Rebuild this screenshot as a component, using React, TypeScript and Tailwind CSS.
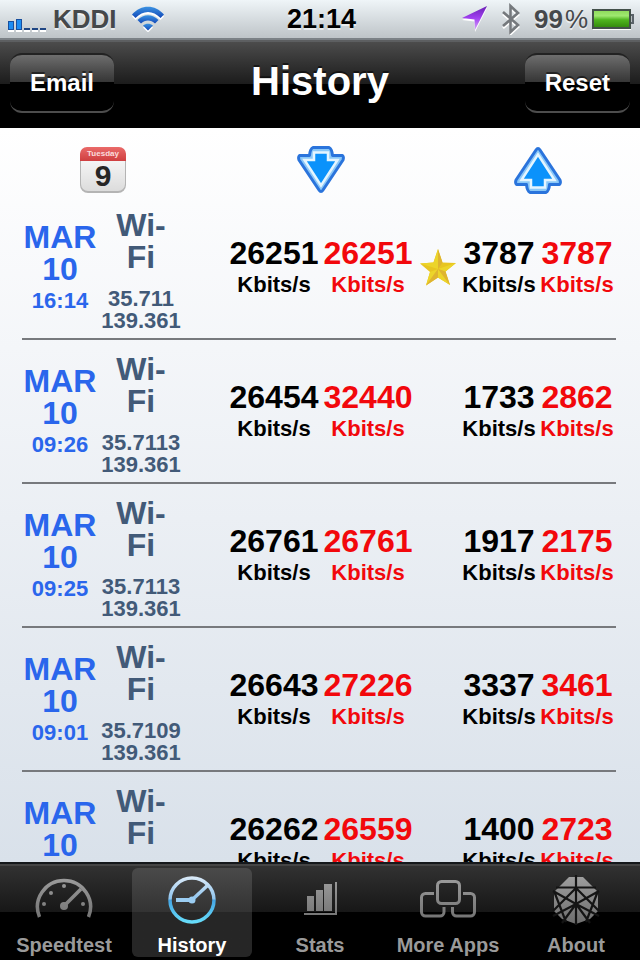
import React from "react";

type Entry = {
  time: string;
  lat: string;
  lng: string;
  down: string;
  downMax: string;
  up: string;
  upMax: string;
  starred?: boolean;
};

const entries: Entry[] = [
  { time: "16:14", lat: "35.711", lng: "139.361", down: "26251", downMax: "26251", up: "3787", upMax: "3787", starred: true },
  { time: "09:26", lat: "35.7113", lng: "139.361", down: "26454", downMax: "32440", up: "1733", upMax: "2862" },
  { time: "09:25", lat: "35.7113", lng: "139.361", down: "26761", downMax: "26761", up: "1917", upMax: "2175" },
  { time: "09:01", lat: "35.7109", lng: "139.361", down: "26643", downMax: "27226", up: "3337", upMax: "3461" },
  { time: "", lat: "", lng: "", down: "26262", downMax: "26559", up: "1400", upMax: "2723" },
];

function StatusBar() {
  return (
    <div className="grid h-10 shrink-0 grid-cols-[1fr_auto_1fr] items-center border-b-2 border-[#7b8186] bg-linear-to-b from-[#eff5f8] to-[#bec4c8] pr-[5px] pl-2 text-[26px] leading-8 font-bold text-[#45484b] text-shadow-[0_2px_0_#ffffff99]">
      <div className="flex items-center">
        <svg width="39" height="13" viewBox="0 0 39 13" className="mt-3 mr-[6px] shrink-0" aria-hidden="true">
          <rect x="0.5" y="2.5" width="5" height="8" fill="#1c8df2" stroke="#174f9e" />
          <rect x="8.5" y="0.5" width="5" height="10" fill="#1c8df2" stroke="#174f9e" />
          <path d="M16 10h6M24 10h6M32 10h6" stroke="#1f4684" strokeWidth="2" />
          <path d="M0 12h6M8 12h6M16 12h6M24 12h6M32 12h6" stroke="#fff" strokeWidth="2" />
        </svg>
        <span>KDDI</span>
        <svg width="34" height="26" viewBox="0 0 34 26" className="ml-[14px] shrink-0" fill="none" aria-hidden="true">
          <defs>
            <linearGradient id="wifi" x1="0" y1="0" x2="0" y2="1">
              <stop offset="0" stopColor="#3b93e2" />
              <stop offset="1" stopColor="#1248b8" />
            </linearGradient>
          </defs>
          <g fill="#fff" transform="translate(0 2)">
            <path d="M1 8.500C10 -2 24 -2 33 8.500L29.500 12C22 4 12 4 4.500 12ZM12 19.500 17 24.500 22 19.500C19 17 15 17 12 19.500Z" />
          </g>
          <g fill="url(#wifi)">
            <path d="M1 8.500C10 -2 24 -2 33 8.500L29.500 12C22 4 12 4 4.500 12Z" />
            <path d="M6.500 14C12.500 7.500 21.500 7.500 27.500 14L24 17.500C20 13.500 14 13.500 10 17.500Z" />
            <path d="M12 19.500C15 17 19 17 22 19.500L17 24.500Z" />
          </g>
        </svg>
      </div>
      <span className="text-[27px] text-black">21:14</span>
      <div className="flex items-center justify-end">
        <svg width="26" height="26" viewBox="0 0 26 26" className="mr-[13px]" aria-hidden="true">
          <defs>
            <linearGradient id="loc" x1="0" y1="0" x2="0" y2="1">
              <stop offset="0" stopColor="#6a20b4" />
              <stop offset="0.5" stopColor="#a040f0" />
              <stop offset="1" stopColor="#d8a8fa" />
            </linearGradient>
          </defs>
          <path d="M25 2 13 26 12.500 15.500 0 14Z" fill="#fff" />
          <path d="M25 0 13 24 12.500 13.500 0 12Z" fill="url(#loc)" />
        </svg>
        <svg width="20" height="32" viewBox="0 0 20 32" className="mr-[13px]" fill="none" strokeWidth="2.600" aria-hidden="true">
          <path d="M2 10 17 23 9.500 30V4L17 11 2 24" stroke="#fff" transform="translate(0 1)" />
          <path d="M2 9 17 22 9.500 29V3L17 10 2 23" stroke="#75797d" />
        </svg>
        <span>99</span>
        <span className="ml-[2px] font-normal">%</span>
        <svg width="43" height="22" viewBox="0 0 43 22" className="ml-1" aria-hidden="true">
          <defs>
            <linearGradient id="bat" x1="0" y1="0" x2="0" y2="1">
              <stop offset="0" stopColor="#8fdc5c" />
              <stop offset="0.3" stopColor="#9fe870" />
              <stop offset="0.550" stopColor="#4fb51f" />
              <stop offset="1" stopColor="#358c0e" />
            </linearGradient>
          </defs>
          <path d="M1 21h38" stroke="#fff" strokeWidth="2" />
          <rect x="1" y="2" width="37" height="18" fill="#cfeebb" stroke="#43504a" strokeWidth="2" />
          <rect x="2" y="3" width="35" height="16" fill="url(#bat)" />
          <path d="M39 7h2v8h-2" fill="#b8bec2" stroke="#5a6268" strokeWidth="2" />
        </svg>
      </div>
    </div>
  );
}

function NavButton({ children }: { children: string }) {
  return (
    <button
      type="button"
      className="h-[60px] rounded-xl border-t-2 border-b-2 border-t-[#222] border-b-[#4d4d4d] bg-linear-to-b from-[#6e6e6e] via-[#353535] via-[49%] to-black to-[49%] px-5 text-2xl font-bold text-white text-shadow-[0_-2px_0_#00000080]"
    >
      {children}
    </button>
  );
}

function NavBar() {
  return (
    <header className="grid h-22 shrink-0 grid-cols-[1fr_auto_1fr] items-center border-t-2 border-[#5d5f61] bg-linear-to-b from-[#4c4c4c] via-[#1c1c1c] via-[49%] to-black to-[49%] px-[10px] pb-1">
      <div>
        <NavButton>Email</NavButton>
      </div>
      <h1 className="pb-1 text-[40px] leading-[48px] font-bold text-white text-shadow-[0_-2px_0_#00000080]">History</h1>
      <div className="text-right">
        <NavButton>Reset</NavButton>
      </div>
    </header>
  );
}

function CalendarIcon() {
  return (
    <svg width="48" height="48" viewBox="0 0 48 48" className="mx-auto block" role="img" aria-label="Date">
      <defs>
        <linearGradient id="page" x1="0" y1="0" x2="0" y2="1">
          <stop offset="0" stopColor="#fff" />
          <stop offset="1" stopColor="#dcdcdc" />
        </linearGradient>
        <linearGradient id="band" x1="0" y1="0" x2="0" y2="1">
          <stop offset="0" stopColor="#ea6a69" />
          <stop offset="1" stopColor="#cf3f40" />
        </linearGradient>
      </defs>
      <rect x="1" y="2" width="46" height="45" rx="8" fill="#b4b4b4" />
      <rect x="2" y="2" width="44" height="43" rx="7" fill="url(#page)" />
      <path d="M1 15V8a7 7 0 0 1 7-7h32a7 7 0 0 1 7 7v7Z" fill="url(#band)" />
      <text x="24" y="10" textAnchor="middle" fontSize="8" fontWeight="700" fill="#fbdcdc">Tuesday</text>
      <text x="24" y="40" textAnchor="middle" fontSize="30" fontWeight="700" fill="#262626">9</text>
    </svg>
  );
}

function ArrowIcon({ up = false }: { up?: boolean }) {
  return (
    <svg
      width="48"
      height="48"
      viewBox="0 0 48 48"
      className={up ? "mx-auto block rotate-180" : "mx-auto block"}
      role="img"
      aria-label={up ? "Upload" : "Download"}
      strokeLinejoin="round"
    >
      <path d="M16 1.500H32Q35 3 35.500 9.500H45.500Q47 11 46 14L26 44Q24 47 22 44L2 14Q1 11 2.500 9.500H12.500Q13 3 16 1.500Z" fill="#8ac8f8" stroke="#2a74dc" strokeWidth="3" />
      <path d="M17 6.500H31V14H40.500L24 39.500 7.500 14H17Z" fill="#0b92fb" stroke="#e4f5ff" strokeWidth="2.500" strokeLinejoin="miter" />
    </svg>
  );
}

function StarIcon() {
  return (
    <svg width="38" height="38" viewBox="0 0 38 38" className="mx-auto block" role="img" aria-label="Best result">
      <path d="M19 1 23.500 14.500 37 15 26.500 23.500 31 37 19 29.500 7 37.500 11 24 1 15.500 14.500 14.500Z" fill="#e8c521" />
      <path d="M19 1V21L14.500 14.500ZM37 15 19 21 26.500 23.500ZM31 37 19 21V29.500ZM7 37.500 19 21 11 24ZM1 15.500 19 21 14.500 14.500Z" fill="#ecd42a" />
      <path d="M19 1V21L23.500 14.500ZM31 37 19 21 26.500 23.500ZM7 37.500 19 21V29.500Z" fill="#dfb430" />
    </svg>
  );
}

function Rate({ value, peak = false }: { value: string; peak?: boolean }) {
  return (
    <td className={peak ? "border-b-2 border-[#77797d] p-0 pb-px text-[#f2080c]" : "border-b-2 border-[#77797d] p-0 pb-px text-black"}>
      <div className="text-[32px] leading-8">{value}</div>
      <div className="mt-[5px] text-[22px] leading-[22px]">Kbits/s</div>
    </td>
  );
}

function HistoryTable() {
  return (
    <table className="w-full table-fixed border-separate border-spacing-0 text-center font-bold">
      <colgroup>
        <col className="w-[76px]" />
        <col className="w-[86px]" />
        <col />
        <col className="w-[94px]" />
        <col className="w-[94px]" />
        <col className="w-[45px]" />
        <col className="w-[78px]" />
        <col className="w-[78px]" />
      </colgroup>
      <thead>
        <tr>
          <th colSpan={2} className="p-0 pt-[18px] pb-[2px]"><CalendarIcon /></th>
          <td className="p-0" />
          <th colSpan={2} className="p-0 pt-[18px] pb-[2px]"><ArrowIcon /></th>
          <td className="p-0" />
          <th colSpan={2} className="p-0 pt-[18px] pb-[2px]"><ArrowIcon up /></th>
        </tr>
      </thead>
      <tbody>
        {entries.map((e) => (
          <tr key={e.down}>
            <td className="border-b-2 border-[#77797d] p-0 pb-px text-[#2a66ec]">
              <div className="text-[32px] leading-8">MAR<br />10</div>
              <div className="mt-[5px] h-[22px] text-[22px] leading-[22px]">{e.time}</div>
            </td>
            <td className="border-b-2 border-[#77797d] p-0 pt-[13px] pb-[6px] text-[#425a78]">
              <div className="text-[32px] leading-8">Wi-<br />Fi</div>
              <div className="mt-[15px] h-11 text-[22px] leading-[22px]">{e.lat}<br />{e.lng}</div>
            </td>
            <td className="border-b-2 border-[#77797d] p-0" />
            <Rate value={e.down} />
            <Rate value={e.downMax} peak />
            <td className="border-b-2 border-[#77797d] p-0">{e.starred && <StarIcon />}</td>
            <Rate value={e.up} />
            <Rate value={e.upMax} peak />
          </tr>
        ))}
      </tbody>
    </table>
  );
}

function TabDefs() {
  return (
    <svg width="0" height="0" className="absolute" aria-hidden="true">
      <defs>
        <linearGradient id="grey" gradientUnits="userSpaceOnUse" x1="0" y1="0" x2="0" y2="50">
          <stop offset="0" stopColor="#a0a0a0" />
          <stop offset="1" stopColor="#6e6e6e" />
        </linearGradient>
        <linearGradient id="blue" gradientUnits="userSpaceOnUse" x1="0" y1="0" x2="0" y2="50">
          <stop offset="0" stopColor="#e4effa" />
          <stop offset="0.500" stopColor="#8fc4ee" />
          <stop offset="0.520" stopColor="#45a5e4" />
          <stop offset="1" stopColor="#69e0fb" />
        </linearGradient>
      </defs>
    </svg>
  );
}

const icons: Record<string, React.ReactNode> = {
  Speedtest: (
    <g fill="none" stroke="url(#grey)" strokeWidth="3.500">
      <path d="M5.500 43A26.500 26.500 0 1 1 54.500 43" />
      <path d="M30 32 47 15" strokeWidth="3.500" />
      <g fill="url(#grey)" stroke="none">
        <circle cx="30" cy="32" r="4" />
        <circle cx="30" cy="12" r="2" />
        <circle cx="17" cy="19" r="2" />
        <circle cx="10" cy="30" r="2" />
        <circle cx="49" cy="30" r="2" />
      </g>
    </g>
  ),
  History: (
    <g fill="none" stroke="url(#blue)" strokeWidth="3.500">
      <circle cx="30" cy="26" r="22" />
      <path d="M31 25 46 11" />
      <path d="M14 26H30" stroke="#9bcdf2" strokeWidth="4" />
      <circle cx="30" cy="26" r="3.500" fill="#9bcdf2" stroke="none" />
    </g>
  ),
  Stats: (
    <g fill="url(#grey)">
      <path d="M17 22h7v15h-7zM26 16h7v21h-7zM34 10h8v27h-8z" />
      <path d="M45 8h2v33H14v-2h31z" />
    </g>
  ),
  "More Apps": (
    <g fill="none" stroke="url(#grey)" strokeWidth="3">
      <rect x="19.500" y="7.500" width="22" height="22" rx="4" />
      <path d="M16 19.500H7.500a4 4 0 0 0-4 4V38a4 4 0 0 0 4 4H22a4 4 0 0 0 4-4V33M45 19.500H52.500a4 4 0 0 1 4 4V38a4 4 0 0 1-4 4H38.500a4 4 0 0 1-4-4V33" />
    </g>
  ),
  About: (
    <g>
      <path d="M23 3 37 3 46 12 52 18V37L44 45 30 50 16 45 8 37V18L14 12Z" fill="url(#grey)" />
      <path d="M30 1V51M10 13.500H50M7 17 30 30 53 17M30 14 7 37M30 14 53 37M7 42 30 30 53 42M30 30 16 49M30 30 44 49M8 17 20 48M52 17 40 48" stroke="#141414" strokeWidth="2.200" fill="none" />
    </g>
  ),
};

function TabBar() {
  return (
    <nav className="grid h-[98px] shrink-0 grid-cols-5 border-t-2 border-[#15181b] bg-linear-to-b from-[#333] via-[#171717] via-[50%] to-black to-[50%] pt-1 pb-1 inset-shadow-[0_2px_0_#454545]">
      <TabDefs />
      {Object.entries(icons).map(([name, icon]) => (
        <button
          key={name}
          type="button"
          className={
            name === "History"
              ? "mx-1 flex flex-col items-center rounded-md bg-linear-to-b from-[#4a4a4a] via-[#333] via-[49%] to-[#262626] to-[49%] pt-[6px] text-white"
              : "mx-1 flex flex-col items-center pt-[6px] text-[#9a9a9a]"
          }
        >
          <svg width="60" height="52" viewBox="0 0 60 52" className="shrink-0" aria-hidden="true">{icon}</svg>
          <span className="mt-[7px] text-xl leading-6 font-bold whitespace-nowrap">{name}</span>
        </button>
      ))}
    </nav>
  );
}

export default function App() {
  return (
    <div className="flex h-screen flex-col overflow-hidden bg-black font-['Liberation_Sans',Arial,sans-serif]">
      <StatusBar />
      <NavBar />
      <main className="min-h-0 flex-1 overflow-hidden bg-linear-to-b from-white via-[#f4f6f9] via-[30%] to-[#d9e1ea] pr-6 pl-[22px]">
        <HistoryTable />
      </main>
      <TabBar />
    </div>
  );
}
